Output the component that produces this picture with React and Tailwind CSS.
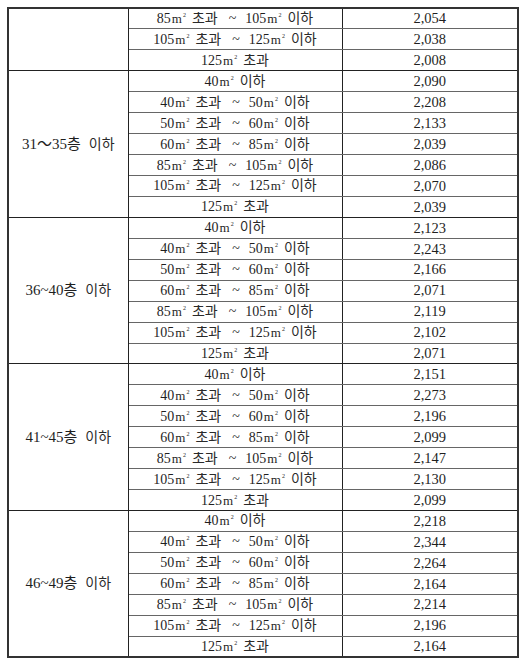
import React from "react";

const sizes = [
  "40 이하",
  "40 초과 ~ 50 이하",
  "50 초과 ~ 60 이하",
  "60 초과 ~ 85 이하",
  "85 초과 ~ 105 이하",
  "105 초과 ~ 125 이하",
  "125 초과",
];

const groups = [
  { label: ["", ""], first: true, rows: [["85 초과 ~ 105 이하", "2,054"], ["105 초과 ~ 125 이하", "2,038"], ["125 초과", "2,008"]] },
  { label: ["31～35층", "이하"], vals: ["2,090", "2,208", "2,133", "2,039", "2,086", "2,070", "2,039"] },
  { label: ["36~40층", "이하"], vals: ["2,123", "2,243", "2,166", "2,071", "2,119", "2,102", "2,071"] },
  { label: ["41~45층", "이하"], vals: ["2,151", "2,273", "2,196", "2,099", "2,147", "2,130", "2,099"] },
  { label: ["46~49층", "이하"], vals: ["2,218", "2,344", "2,264", "2,164", "2,214", "2,196", "2,164"] },
];

function Area({ n }) {
  return (
    <span className="inline-flex items-baseline">
      <span className="text-[14px]">{n}</span>
      <span className="text-[13px] ml-[1px]">m</span>
      <span className="text-[6px] relative -top-[6px] leading-none ml-[1px]">2</span>
    </span>
  );
}

function SizeText({ t }) {
  const parts = t.split(" ");
  return (
    <span className="inline-flex items-baseline justify-center gap-[6px] whitespace-nowrap">
      {parts.map((p, i) => {
        if (/^\d+$/.test(p)) return <Area key={i} n={p} />;
        if (p === "~")
          return (
            <span key={i} className="text-[14px] ml-[5px] mr-[3px]">
              ~
            </span>
          );
        return (
          <span key={i} className="text-[14px] text-[#2a2a2a]">
            {p}
          </span>
        );
      })}
    </span>
  );
}

export default function App() {
  return (
    <div className="w-[525px] h-[666px] bg-white pt-[7px] pl-[7px] font-['Liberation_Serif','Noto_Sans_CJK_KR',serif]">
      <table className="w-[510px] table-fixed border-collapse border-2 border-[#333] text-[15px] leading-none text-[#1f1f1f]">
        <colgroup>
          <col className="w-[120px]" />
          <col className="w-[214px]" />
          <col className="w-[176px]" />
        </colgroup>
        <tbody>
          {groups.map((g, gi) => {
            const rows = g.rows || sizes.map((s, i) => [s, g.vals[i]]);
            return rows.map((r, ri) => {
              const last = ri === rows.length - 1;
              const cell =
                "text-center p-0 border-l border-r border-[#222] border-b " +
                (last ? "border-b-[#222]" : "border-b-[#666]");
              return (
                <tr key={gi + "-" + ri} className="h-[20.94px]">
                  {ri === 0 && (
                    <td rowSpan={rows.length} className="border border-[#222] text-center align-middle p-0">
                      {!g.first && (
                        <span className="inline-flex items-baseline gap-[8px]">
                          <span>{g.label[0]}</span>
                          <span className="text-[14px] text-[#2a2a2a]">{g.label[1]}</span>
                        </span>
                      )}
                    </td>
                  )}
                  <td className={cell}>
                    <SizeText t={r[0]} />
                  </td>
                  <td className={cell + " text-[14.5px]"}>{r[1]}</td>
                </tr>
              );
            });
          })}
        </tbody>
      </table>
    </div>
  );
}
